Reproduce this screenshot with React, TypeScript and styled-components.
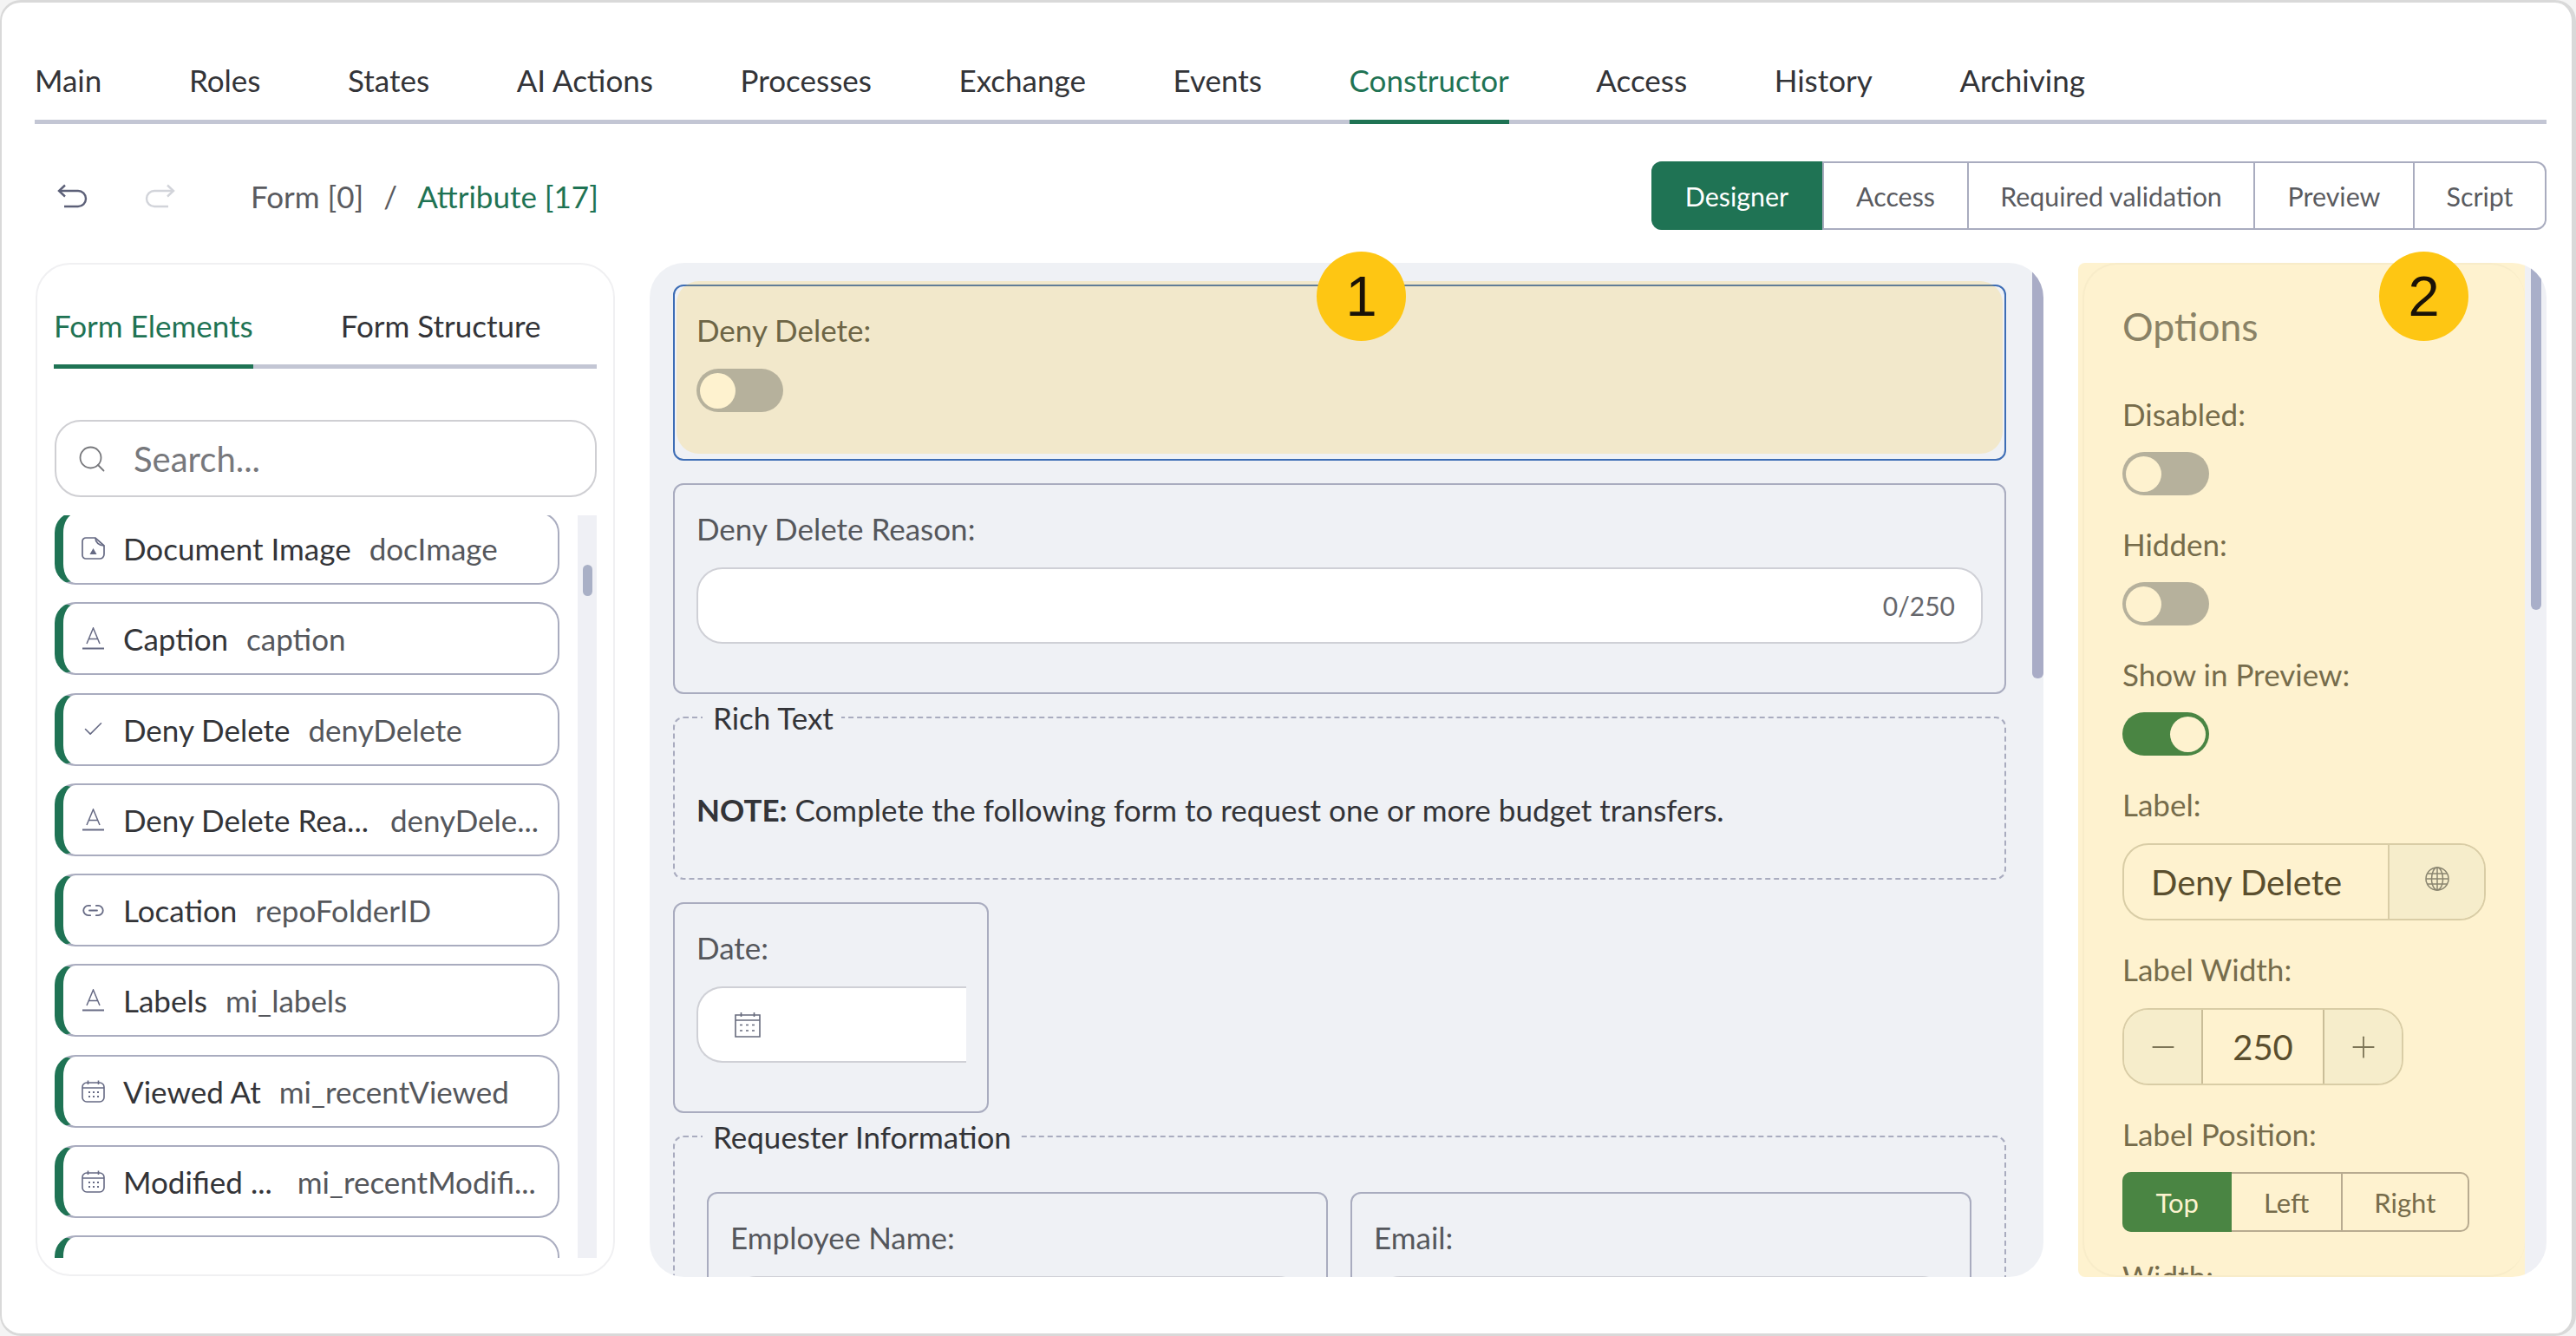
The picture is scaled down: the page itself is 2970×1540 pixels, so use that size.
import styled, { createGlobalStyle } from "styled-components";
import { Check, Link2, Minus, Plus, Search } from "lucide-react";

const GREEN = "#1f7354";
const LINE = "#c3c6d4";
const EDGE = "#a9acbf";
const FONT_SIZE = "35px";

const GlobalStyle = createGlobalStyle`
  html, body {
    margin: 0;
    padding: 0;
    background: #f4f4f4;
  }
  * {
    box-sizing: border-box;
  }
  body {
    font-family: "Lato", "Liberation Sans", sans-serif;
    color: #333438;
  }
`;

const Frame = styled.div`
  width: 2970px;
  height: 1540px;
  padding: 0 29px 0 38px;
  background: #fff;
  border-style: solid;
  border-color: #d9d9d9;
  border-width: 3px 5px 3px 2px;
  border-radius: 24px;
  overflow: hidden;
`;

const TabBar = styled.nav`
  display: flex;
  align-items: flex-end;
  gap: 100.6px;
  height: 140px;
  border-bottom: 5px solid ${LINE};
`;

const Tab = styled.div<{ $active?: boolean }>`
  padding-bottom: 22px;
  margin-bottom: -5px;
  font-size: ${FONT_SIZE};
  line-height: 48px;
  color: ${(p) => (p.$active ? GREEN : "#333438")};
  border-bottom: 5px solid ${(p) => (p.$active ? GREEN : "transparent")};
`;

const Toolbar = styled.div`
  display: flex;
  align-items: center;
  height: 79px;
  margin: 43px 0 38px;
  padding-left: 26px;
`;

const HistoryButtons = styled.div`
  display: flex;
  gap: 64px;
  margin-right: 87px;
  color: #5c6078;
`;

const RedoWrap = styled.span`
  display: flex;
  color: #d2d4da;
`;

const Crumbs = styled.div`
  display: flex;
  gap: 23px;
  margin-top: 1px;
  font-size: ${FONT_SIZE};
  color: #5a5b60;
`;

const CrumbActive = styled.span`
  color: ${GREEN};
`;

const Segments = styled.div`
  display: flex;
  margin-left: auto;
  height: 79px;
  border: 2px solid ${EDGE};
  border-radius: 12px;
`;

const Segment = styled.div<{ $active?: boolean; $w: number }>`
  display: flex;
  align-items: center;
  justify-content: center;
  width: ${(p) => p.$w}px;
  font-size: 30.4px;
  margin: ${(p) => (p.$active ? "-2px 0 -2px -2px" : "0")};
  color: ${(p) => (p.$active ? "#fff" : "#5a5b60")};
  background: ${(p) => (p.$active ? GREEN : "transparent")};
  border-radius: ${(p) => (p.$active ? "12px 0 0 12px" : "0")};
  & + & {
    border-left: 2px solid ${EDGE};
  }
  &:nth-child(2) {
    border-left: 0;
  }
`;

const Columns = styled.div`
  position: relative;
  display: flex;
  gap: 40px;
  height: 1169px;
  margin-left: 1px;
`;

const Badge = styled.div<{ $left: number }>`
  position: absolute;
  top: -13px;
  left: ${(p) => p.$left}px;
  z-index: 5;
  display: flex;
  align-items: center;
  justify-content: center;
  width: 103px;
  height: 103px;
  border-radius: 50%;
  background: #fec613;
  font-family: "Liberation Sans", Arial, sans-serif;
  font-size: 65px;
  color: #1a1208;
`;

/* left column */
const ElementsPanel = styled.aside`
  flex: 0 0 668px;
  height: 1168px;
  padding: 0 19px;
  background: #fff;
  border: 2px solid #f0f0f2;
  border-radius: 40px;
`;

const PanelTabs = styled.div`
  display: flex;
  align-items: flex-end;
  gap: 101px;
  height: 120px;
  border-bottom: 5px solid ${LINE};
`;

const PanelTab = styled.div<{ $active?: boolean }>`
  padding-bottom: 21px;
  margin-bottom: -5px;
  font-size: ${FONT_SIZE};
  line-height: 48px;
  color: ${(p) => (p.$active ? GREEN : "#333438")};
  border-bottom: 5px solid ${(p) => (p.$active ? GREEN : "transparent")};
`;

const SearchBox = styled.div`
  display: flex;
  align-items: center;
  gap: 30px;
  height: 89px;
  margin: 59px 0 21px 1px;
  padding-left: 23px;
  border: 2px solid #cfcfd3;
  border-radius: 30px;
  font-size: 40px;
  color: #77787c;
`;

const ListArea = styled.div`
  display: flex;
  justify-content: space-between;
  height: 856px;
  overflow: hidden;
`;

const ItemList = styled.div`
  display: flex;
  flex-direction: column;
  gap: 20.25px;
  width: 582px;
  margin: -4px 0 0 1px;
`;

const Item = styled.div`
  flex: none;
  display: flex;
  align-items: center;
  height: 84px;
  padding-left: 21px;
  background: #fff;
  border: 2px solid ${EDGE};
  border-left: 10px solid ${GREEN};
  border-radius: 24px;
  font-size: ${FONT_SIZE};
  white-space: nowrap;
  overflow: hidden;
`;

const ItemIcon = styled.span`
  flex: none;
  display: flex;
  width: 27px;
  margin-right: 21px;
  color: #666a84;
`;

const ItemCode = styled.span<{ $gap?: number }>`
  margin-left: ${(p) => p.$gap ?? 21}px;
  color: #55575c;
`;

const Track = styled.div`
  flex: 0 0 22px;
  padding: 57px 5px 0 6px;
  background: #eff0f5;
`;

const Thumb = styled.div`
  height: 36px;
  border-radius: 6px;
  background: #a9b0c6;
`;

/* center column */
const Canvas = styled.main`
  position: relative;
  flex: 0 0 1607px;
  padding: 25px 43px 0 27px;
  background: #eff1f5;
  border-radius: 40px;
  overflow: hidden;
`;

const CanvasThumb = styled.div`
  position: absolute;
  top: 0;
  right: 0;
  width: 13px;
  height: 479px;
  border-radius: 6px;
  background: #a9acc6;
`;

const Field = styled.div<{ $selected?: boolean; $w?: number }>`
  position: relative;
  width: ${(p) => (p.$w ? `${p.$w}px` : "auto")};
  padding: 26px 25px ${(p) => (p.$selected ? "54px" : "56px")};
  margin-bottom: 26px;
  border: 2px solid ${(p) => (p.$selected ? "#3d6db5" : EDGE)};
  border-radius: 12px;
`;

/* the yellow callout laid over the selected field */
const Highlight = styled.div`
  position: absolute;
  top: -6px;
  left: 2px;
  right: 2px;
  bottom: 6px;
  border-radius: 26px;
  background: rgba(254, 198, 19, 0.19);
`;

const FieldLabel = styled.div<{ $tone?: boolean }>`
  position: relative;
  height: 48px;
  margin-bottom: 21px;
  font-size: ${FONT_SIZE};
  line-height: 48px;
  color: ${(p) => (p.$tone ? "#6d6546" : "#55575c")};
`;

const TextInput = styled.div`
  display: flex;
  align-items: center;
  justify-content: flex-end;
  height: 88px;
  padding-right: 30px;
  background: #fff;
  border: 2px solid #cfd0d6;
  border-radius: 30px;
  font-size: 30px;
  color: #66676c;
`;

const DateInput = styled.div`
  display: flex;
  align-items: center;
  height: 88px;
  margin-right: -1px;
  padding-left: 42px;
  background: #fff;
  border: 2px solid #cfd0d6;
  border-right: 0;
  border-radius: 30px 0 0 30px;
  color: #666a7c;
`;

const Group = styled.fieldset<{ $h: number; $pad: string }>`
  min-width: 0;
  height: ${(p) => p.$h}px;
  margin: -19px 0 26px;
  padding: ${(p) => p.$pad};
  border: 2px dashed ${EDGE};
  border-radius: 12px;
`;

const GroupTitle = styled.legend`
  height: 40px;
  margin-left: 7px;
  padding: 0 9px 0 12px;
  font-size: ${FONT_SIZE};
  line-height: 40px;
  color: #333438;
`;

const Note = styled.p`
  margin: 0;
  font-size: ${FONT_SIZE};
  line-height: 48px;
`;

const FieldGrid = styled.div`
  display: grid;
  grid-template-columns: 716px 716px;
  gap: 26px;
  margin-left: 12px;
`;

/* right column */
const OptionsPanel = styled.aside`
  flex: 0 0 540px;
  display: flex;
  border-radius: 8px 40px 40px 8px;
  overflow: hidden;
`;

const OptionsTint = styled.div`
  flex: 0 0 515px;
  padding-left: 5px;
  background: #fef2cf;
`;

const OptionsInner = styled.div`
  height: 100%;
  padding: 0 0 0 44px;
  border: 2px solid #f8ecc9;
  border-right: 0;
  border-radius: 40px;
  overflow: hidden;
`;

const OptionsTrack = styled.div`
  flex: 1;
  padding-left: 7px;
  background: #eff0f5;
`;

const OptionsThumb = styled.div`
  width: 12px;
  height: 400px;
  border-radius: 6px;
  background: #a9afc9;
`;

const OptionsTitle = styled.h2`
  margin: 41px 0 47px;
  font-size: 44.5px;
  font-weight: 400;
  line-height: 60px;
  color: #8a8266;
`;

const OptionLabel = styled.div`
  height: 48px;
  margin-bottom: 20px;
  font-size: ${FONT_SIZE};
  line-height: 48px;
  color: #766c4b;
`;

const Switch = styled.div<{ $on?: boolean }>`
  position: relative;
  display: flex;
  justify-content: ${(p) => (p.$on ? "flex-end" : "flex-start")};
  align-items: center;
  width: 100px;
  height: 50px;
  padding: 0 4px;
  border-radius: 25px;
  background: ${(p) => (p.$on ? "#4a8543" : "#b6b19c")};
`;

const OptionRow = styled.div`
  margin-bottom: 32px;
`;

const Knob = styled.div`
  width: 41px;
  height: 41px;
  border-radius: 50%;
  background: #fef2cf;
`;

const LabelInput = styled.div`
  display: flex;
  width: 419px;
  height: 89px;
  margin-top: 21px;
  border: 2px solid #d9cda6;
  border-radius: 30px;
  overflow: hidden;
  font-size: 40px;
  color: #5a4e2e;
`;

const LabelValue = styled.div`
  flex: 1;
  display: flex;
  align-items: center;
  padding-left: 31px;
  border-right: 2px solid #d9cda6;
`;

const LabelAddon = styled.div`
  flex: 0 0 109px;
  display: flex;
  align-items: center;
  justify-content: center;
  padding-bottom: 8px;
  background: #f6edcb;
  color: #8a8570;
`;

const Stepper = styled.div`
  display: flex;
  width: 324px;
  height: 89px;
  margin-top: 21px;
  border: 2px solid #d9cda6;
  border-radius: 30px;
  overflow: hidden;
`;

const StepButton = styled.div`
  flex: 0 0 89px;
  display: flex;
  align-items: center;
  justify-content: center;
  background: #f6edcb;
  color: #7d7557;
`;

const StepValue = styled.div`
  flex: 1;
  display: flex;
  align-items: center;
  justify-content: center;
  border: solid #c9bd98;
  border-width: 0 2px;
  font-size: 40px;
  color: #5a4e2e;
`;

const PositionGroup = styled.div`
  display: flex;
  width: 400px;
  height: 69px;
  margin: 1px 0 27px;
  border: 2px solid #b8ab90;
  border-radius: 10px;
`;

const PositionOption = styled.div<{ $active?: boolean; $w: number }>`
  display: flex;
  align-items: center;
  justify-content: center;
  width: ${(p) => p.$w}px;
  margin: ${(p) => (p.$active ? "-2px 0 -2px -2px" : "0")};
  font-size: 31px;
  color: ${(p) => (p.$active ? "#fdf3cf" : "#766c4b")};
  background: ${(p) => (p.$active ? "#4a8543" : "transparent")};
  border-radius: ${(p) => (p.$active ? "10px 0 0 10px" : "0")};
  &:last-child {
    border-left: 2px solid #b8ab90;
  }
`;

const UndoIcon = () => (
  <svg width="36" height="28" viewBox="0 0 36 28" fill="none" stroke="currentColor" strokeWidth="2.4">
    <path d="M9 1.5L2 8l7 6.5" />
    <path d="M2 8h22a9 9 0 0 1 0 18H8" />
  </svg>
);

const RedoIcon = () => (
  <svg width="36" height="28" viewBox="0 0 36 28" fill="none" stroke="currentColor" strokeWidth="2.4">
    <path d="M27 1.5L34 8l-7 6.5" />
    <path d="M34 8H12a9 9 0 0 0 0 18h16" />
  </svg>
);

const DocIcon = () => (
  <svg width="27" height="26" viewBox="0 0 27 26" fill="none" stroke="currentColor" strokeWidth="1.7">
    <path d="M5 1h11l10 9v10a5 5 0 0 1-5 5H5a4 4 0 0 1-4-4V5a4 4 0 0 1 4-4z" />
    <path d="M16 1c0 5 4 9 10 9" />
    <path d="M13.5 13l4 7h-8z" fill="currentColor" stroke="none" />
  </svg>
);

const TextIcon = () => (
  <svg width="27" height="26" viewBox="0 0 27 26" fill="none" stroke="currentColor" strokeWidth="1.5">
    <path d="M6 19L13.5 1l7.5 18M8.5 13.5h10" />
    <path d="M1 24.5h25" strokeWidth="2" />
  </svg>
);

const CalendarIcon = () => (
  <svg width="27" height="26" viewBox="0 0 27 26" fill="none" stroke="currentColor" strokeWidth="1.6">
    <rect x="1" y="3" width="25" height="22" rx="5" />
    <path d="M1 9h25M7.5 0.5v4.5M19.5 0.5v4.5" />
    <path d="M8 14h2M13 14h2M18 14h2M8 19h2M13 19h2M18 19h2" strokeWidth="2.2" />
  </svg>
);

const DateIcon = () => (
  <svg width="30" height="30" viewBox="0 0 30 30" fill="none" stroke="currentColor" strokeWidth="1.6">
    <path d="M1 4h28v25H1zM1 10h28M7.5 1v5M22.5 1v5" />
    <path d="M6 15.5h4M13 15.5h4M20 15.5h4M6 22h4M13 22h4M20 22h4" strokeDasharray="3 1" />
  </svg>
);

const GlobeIcon = () => (
  <svg width="28" height="28" viewBox="0 0 28 28" fill="none" stroke="currentColor" strokeWidth="1.5">
    <circle cx="14" cy="14" r="13" />
    <ellipse cx="14" cy="14" rx="6.5" ry="13" />
    <path d="M3 8h22M3 20h22M1 14h26M14 1v26" />
  </svg>
);

type ItemRow = {
  icon: "doc" | "text" | "check" | "link" | "date" | "none";
  name: string;
  code: string;
  gap?: number;
};

const ITEMS: ItemRow[] = [
  { icon: "doc", name: "Document Image", code: "docImage" },
  { icon: "text", name: "Caption", code: "caption" },
  { icon: "check", name: "Deny Delete", code: "denyDelete" },
  { icon: "text", name: "Deny Delete Rea...", code: "denyDele...", gap: 25 },
  { icon: "link", name: "Location", code: "repoFolderID" },
  { icon: "text", name: "Labels", code: "mi_labels" },
  { icon: "date", name: "Viewed At", code: "mi_recentViewed" },
  { icon: "date", name: "Modified ...", code: "mi_recentModifi...", gap: 29 },
  { icon: "none", name: "", code: "" },
];

const TOP_TABS = ["Main", "Roles", "States", "AI Actions", "Processes", "Exchange", "Events", "Constructor", "Access", "History", "Archiving"];

const SEGMENTS: [string, number][] = [
  ["Designer", 197],
  ["Access", 167],
  ["Required validation", 330],
  ["Preview", 184],
  ["Script", 152],
];

const renderIcon = (icon: ItemRow["icon"]) => {
  switch (icon) {
    case "doc":
      return <DocIcon />;
    case "text":
      return <TextIcon />;
    case "check":
      return <Check size={27} strokeWidth={1.4} />;
    case "link":
      return <Link2 size={27} strokeWidth={1.6} />;
    case "date":
      return <CalendarIcon />;
    default:
      return null;
  }
};

const App = () => {
  return (
    <>
      <GlobalStyle />
      <Frame>
        <TabBar>
          {TOP_TABS.map((t) => (
            <Tab key={t} $active={t === "Constructor"}>
              {t}
            </Tab>
          ))}
        </TabBar>

        <Toolbar>
          <HistoryButtons>
            <UndoIcon />
            <RedoWrap>
              <RedoIcon />
            </RedoWrap>
          </HistoryButtons>
          <Crumbs>
            <span>Form [0]</span>
            <span>/</span>
            <CrumbActive>Attribute [17]</CrumbActive>
          </Crumbs>
          <Segments>
            {SEGMENTS.map(([label, w], i) => (
              <Segment key={label} $active={i === 0} $w={w}>
                {label}
              </Segment>
            ))}
          </Segments>
        </Toolbar>

        <Columns>
          <Badge $left={1477}>1</Badge>
          <Badge $left={2702}>2</Badge>

          <ElementsPanel>
            <PanelTabs>
              <PanelTab $active>Form Elements</PanelTab>
              <PanelTab>Form Structure</PanelTab>
            </PanelTabs>
            <SearchBox>
              <Search size={36} strokeWidth={1.2} />
              Search...
            </SearchBox>
            <ListArea>
              <ItemList>
                {ITEMS.map((item, i) => (
                  <Item key={i}>
                    <ItemIcon>{renderIcon(item.icon)}</ItemIcon>
                    {item.name}
                    <ItemCode $gap={item.gap}>{item.code}</ItemCode>
                  </Item>
                ))}
              </ItemList>
              <Track>
                <Thumb />
              </Track>
            </ListArea>
          </ElementsPanel>

          <Canvas>
            <CanvasThumb />
            <Field $selected>
              <Highlight />
              <FieldLabel $tone>Deny Delete:</FieldLabel>
              <Switch>
                <Knob />
              </Switch>
            </Field>
            <Field>
              <FieldLabel>Deny Delete Reason:</FieldLabel>
              <TextInput>0/250</TextInput>
            </Field>
            <Group $h={207} $pad="62px 25px 0">
              <GroupTitle>Rich Text</GroupTitle>
              <Note>
                <strong>NOTE:</strong> Complete the following form to request one or more budget transfers.
              </Note>
            </Group>
            <Field $w={364}>
              <FieldLabel>Date:</FieldLabel>
              <DateInput>
                <DateIcon />
              </DateInput>
            </Field>
            <Group $h={400} $pad="44px 38px 0 25px">
              <GroupTitle>Requester Information</GroupTitle>
              <FieldGrid>
                <Field>
                  <FieldLabel>Employee Name:</FieldLabel>
                  <TextInput />
                </Field>
                <Field>
                  <FieldLabel>Email:</FieldLabel>
                  <TextInput />
                </Field>
              </FieldGrid>
            </Group>
          </Canvas>

          <OptionsPanel>
            <OptionsTint>
              <OptionsInner>
                <OptionsTitle>Options</OptionsTitle>
                <OptionLabel>Disabled:</OptionLabel>
                <OptionRow>
                  <Switch>
                    <Knob />
                  </Switch>
                </OptionRow>
                <OptionLabel>Hidden:</OptionLabel>
                <OptionRow>
                  <Switch>
                    <Knob />
                  </Switch>
                </OptionRow>
                <OptionLabel>Show in Preview:</OptionLabel>
                <OptionRow>
                  <Switch $on>
                    <Knob />
                  </Switch>
                </OptionRow>
                <OptionLabel>Label:</OptionLabel>
                <OptionRow>
                  <LabelInput>
                    <LabelValue>Deny Delete</LabelValue>
                    <LabelAddon>
                      <GlobeIcon />
                    </LabelAddon>
                  </LabelInput>
                </OptionRow>
                <OptionLabel>Label Width:</OptionLabel>
                <OptionRow>
                  <Stepper>
                    <StepButton>
                      <Minus size={40} strokeWidth={1.1} />
                    </StepButton>
                    <StepValue>250</StepValue>
                    <StepButton>
                      <Plus size={40} strokeWidth={1.1} />
                    </StepButton>
                  </Stepper>
                </OptionRow>
                <OptionLabel>Label Position:</OptionLabel>
                <PositionGroup>
                  <PositionOption $active $w={127}>Top</PositionOption>
                  <PositionOption $w={126}>Left</PositionOption>
                  <PositionOption $w={147}>Right</PositionOption>
                </PositionGroup>
                <OptionLabel>Width:</OptionLabel>
              </OptionsInner>
            </OptionsTint>
            <OptionsTrack>
              <OptionsThumb />
            </OptionsTrack>
          </OptionsPanel>
        </Columns>
      </Frame>
    </>
  );
};

export default App;
